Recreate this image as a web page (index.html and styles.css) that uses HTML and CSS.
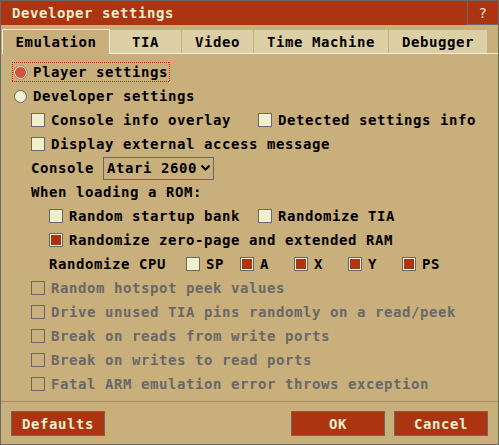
FILE: index.html
```html
<!DOCTYPE html>
<html>
<head>
<meta charset="utf-8">
<link rel="stylesheet" href="styles.css">
</head>
<body>
<div class="dialog">
  <div class="titlebar">
    <span class="title">Developer settings</span>
    <span class="help">?</span>
  </div>
  <div class="tabs">
    <div class="tab active w-emu">Emulation</div>
    <div class="tab w-tia">TIA</div>
    <div class="tab w-tia">Video</div>
    <div class="tab w-tm">Time Machine</div>
    <div class="tab w-dbg">Debugger</div>
    <div class="tab-fill"></div>
  </div>
  <div class="content">
    <div class="row lvl0f">
      <span class="focus"><span class="radio on"></span><span class="lbl">Player settings</span></span>
    </div>
    <div class="row lvl0">
      <span class="radio"></span><span class="lbl">Developer settings</span>
    </div>
    <div class="row lvl1">
      <span class="item lead1"><span class="cb"></span><span class="lbl">Console info overlay</span></span>
      <span class="item"><span class="cb"></span><span class="lbl">Detected settings info</span></span>
    </div>
    <div class="row lvl1">
      <span class="cb"></span><span class="lbl">Display external access message</span>
    </div>
    <div class="row lvl1">
      <span class="text">Console</span>
      <span class="select"><span class="text">Atari 2600</span>
        <svg class="chev" width="9" height="6" viewBox="0 0 9 6"><path d="M0.5 0.5 L4.5 4.5 L8.5 0.5" fill="none" stroke="#000" stroke-width="2"/></svg>
      </span>
    </div>
    <div class="row lvl1">
      <span class="text">When loading a ROM:</span>
    </div>
    <div class="row lvl2">
      <span class="item lead2"><span class="cb"></span><span class="lbl">Random startup bank</span></span>
      <span class="item"><span class="cb"></span><span class="lbl">Randomize TIA</span></span>
    </div>
    <div class="row lvl2">
      <span class="cb on"></span><span class="lbl">Randomize zero-page and extended RAM</span>
    </div>
    <div class="row lvl2">
      <span class="text cpu-label">Randomize CPU</span>
      <span class="item cpu"><span class="cb"></span><span class="lbl">SP</span></span>
      <span class="item cpu"><span class="cb on"></span><span class="lbl">A</span></span>
      <span class="item cpu"><span class="cb on"></span><span class="lbl">X</span></span>
      <span class="item cpu"><span class="cb on"></span><span class="lbl">Y</span></span>
      <span class="item cpu"><span class="cb on"></span><span class="lbl">PS</span></span>
    </div>
    <div class="row lvl1 disabled">
      <span class="cb off"></span><span class="lbl">Random hotspot peek values</span>
    </div>
    <div class="row lvl1 disabled">
      <span class="cb off"></span><span class="lbl">Drive unused TIA pins randomly on a read/peek</span>
    </div>
    <div class="row lvl1 disabled">
      <span class="cb off"></span><span class="lbl">Break on reads from write ports</span>
    </div>
    <div class="row lvl1 disabled">
      <span class="cb off"></span><span class="lbl">Break on writes to read ports</span>
    </div>
    <div class="row lvl1 disabled">
      <span class="cb off"></span><span class="lbl">Fatal ARM emulation error throws exception</span>
    </div>
  </div>
  <div class="sep"></div>
  <div class="footer">
    <button class="btn defaults">Defaults</button>
    <button class="btn">OK</button>
    <button class="btn">Cancel</button>
  </div>
</div>
</body>
</html>
```

FILE: styles.css
```css
html, body {
  margin: 0;
  padding: 0;
  background: #c9af7c;
}
body {
  font-family: "DejaVu Sans Mono", "Liberation Mono", monospace;
  font-weight: bold;
  font-size: 14px;
  letter-spacing: 0.57px;
  color: #000;
}
.dialog {
  width: 499px;
  height: 445px;
  box-sizing: border-box;
  border: 1px solid #686868;
  background: #c9af7c;
  display: flex;
  flex-direction: column;
}
.titlebar {
  height: 24px;
  background: #ac3410;
  display: flex;
  align-items: center;
  color: #f0f0cf;
  flex: none;
}
.title {
  padding-left: 11px;
  flex: 1;
}
.help {
  width: 31px;
  height: 24px;
  box-sizing: border-box;
  border-left: 1px solid #686868;
  border-bottom: 1px solid #686868;
  display: flex;
  align-items: center;
  justify-content: center;
  font-weight: normal;
}
.tabs {
  margin-top: 4px;
  margin-left: 1px;
  height: 25px;
  display: flex;
  align-items: flex-end;
  flex: none;
}
.tab {
  height: 24px;
  box-sizing: border-box;
  border-bottom: 1px solid #f0f0cf;
  background: linear-gradient(to right, #dccfa5 calc(100% - 1px), #c9af7c 0);
  display: flex;
  align-items: center;
  justify-content: center;
  padding-right: 1px;
}
.tab.active {
  height: 25px;
  background: #c9af7c;
  border: 1px solid #f0f0cf;
  border-bottom: none;
  padding-right: 0;
}
.w-emu { width: 108px; }
.w-tia { width: 72px; }
.w-tm { width: 135px; }
.w-dbg { width: 99px; }
.tab-fill {
  flex: 1;
  height: 24px;
  border-bottom: 1px solid #f0f0cf;
  box-sizing: border-box;
}
.content {
  padding-top: 6px;
  flex: none;
}
.row {
  height: 24px;
  display: flex;
  align-items: center;
}
.lvl0f { padding-left: 11px; }
.lvl0 { padding-left: 13px; }
.lvl1 { padding-left: 30px; }
.lvl2 { padding-left: 48px; }
.focus {
  height: 20px;
  box-sizing: border-box;
  padding: 0 2px;
  display: flex;
  align-items: center;
  background-image:
    repeating-linear-gradient(to right, #d81a10 0 1px, transparent 1px 2px),
    repeating-linear-gradient(to right, #d81a10 0 1px, transparent 1px 2px),
    repeating-linear-gradient(to bottom, #d81a10 0 1px, transparent 1px 2px),
    repeating-linear-gradient(to bottom, #d81a10 0 1px, transparent 1px 2px);
  background-size: 100% 1px, 100% 1px, 1px 100%, 1px 100%;
  background-position: left top, left bottom, left top, right top;
  background-repeat: no-repeat;
}
.radio {
  width: 13px;
  height: 13px;
  box-sizing: border-box;
  border-radius: 50%;
  border: 1px solid #686868;
  background: #f0f0cf;
  margin-right: 6px;
  flex: none;
}
.radio.on {
  background: #cf563d;
  border-color: #f3ead6;
  box-shadow: 0 0 0 0.5px #9a7a66;
}
.item {
  display: flex;
  align-items: center;
}
.lead1 { width: 227px; }
.lead2 { width: 209px; }
.cb {
  width: 14px;
  height: 14px;
  box-sizing: border-box;
  border: 1px solid #686868;
  background: #f0f0cf;
  margin-right: 6px;
  flex: none;
}
.cb.on {
  background: #ac3410;
  box-shadow: inset 0 0 0 1px #f0f0cf;
}
.cb.off {
  background: transparent;
}
.disabled { color: #686868; }
.lbl, .text { white-space: nowrap; }
.select {
  margin-left: 9px;
  width: 111px;
  height: 23px;
  box-sizing: border-box;
  border: 1px solid #686868;
  padding-left: 3px;
  display: flex;
  align-items: center;
}
.chev {
  margin-left: 4px;
  display: block;
}
.cpu-label { width: 137px; }
.cpu { width: 54px; }
.sep {
  margin-top: 5px;
  height: 1px;
  background: #a38c61;
  flex: none;
}
.footer {
  margin-top: 9px;
  padding: 0 10px;
  display: flex;
  gap: 9px;
}
.btn {
  width: 94px;
  height: 25px;
  box-sizing: border-box;
  border: 1px solid #686868;
  background: #ac3410;
  color: #f0f0cf;
  font: inherit;
  letter-spacing: inherit;
  padding: 0;
  margin: 0;
}
.defaults { margin-right: auto; }
```
